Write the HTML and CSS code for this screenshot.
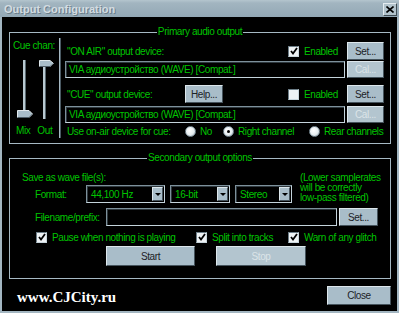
FILE: index.html
```html
<!DOCTYPE html>
<html>
<head>
<meta charset="utf-8">
<link rel="stylesheet" href="styles.css">
</head>
<body>
<div class="window">
  <div class="titlebar">
    <span class="title">Output Configuration</span>
    <span class="xbtn"><svg width="8" height="7" viewBox="0 0 8 7"><path d="M0.5 0.5 L7.5 6.5 M7.5 0.5 L0.5 6.5" stroke="#000" stroke-width="1.6"/></svg></span>
  </div>
  <div class="client">
    <fieldset class="group primary">
      <legend>Primary audio output</legend>
      <div class="primary-inner">
        <div class="cue">
          <div class="cue-label">Cue chan:</div>
          <div class="sliders">
            <div class="slider mix">
              <div class="track"></div>
              <svg class="thumb" width="16" height="8" viewBox="0 0 16 8"><path d="M0.5 0.5 H12 L15.5 4 L12 7.5 H0.5 Z" fill="#a9bdc9" stroke="#e0e8ec" stroke-width="1"/><path d="M0.5 7.5 H12 L15.5 4" fill="none" stroke="#4d5c66"/></svg>
            </div>
            <div class="slider out">
              <div class="track"></div>
              <svg class="thumb" width="15" height="7" viewBox="0 0 15 7"><path d="M0.5 0.5 H11 L14.5 3.5 L11 6.5 H0.5 Z" fill="#a9bdc9" stroke="#e0e8ec" stroke-width="1"/><path d="M0.5 6.5 H11 L14.5 3.5" fill="none" stroke="#4d5c66"/></svg>
            </div>
          </div>
          <div class="slider-labels"><span>Mix</span><span>Out</span></div>
        </div>
        <div class="devices">
          <div class="drow r1">
            <span class="dlabel">"ON AIR" output device:</span>
            <span></span>
            <span></span>
            <label class="check"><span class="cb checked"><svg width="8" height="8" viewBox="0 0 8 8"><path d="M1 4 L3 6.5 L7 1" fill="none" stroke="#000" stroke-width="1.8"/></svg></span>Enabled</label>
            <span class="btn">Set...</span>
          </div>
          <div class="drow r2">
            <span class="field">VIA аудиоустройство (WAVE) [Compat.]</span>
            <span class="btn disabled">Cal...</span>
          </div>
          <div class="drow r3">
            <span class="dlabel">"CUE" output device:</span>
            <span class="btn">Help...</span>
            <span></span>
            <label class="check"><span class="cb"></span>Enabled</label>
            <span class="btn">Set...</span>
          </div>
          <div class="drow r4">
            <span class="field">VIA аудиоустройство (WAVE) [Compat.]</span>
            <span class="btn disabled">Cal...</span>
          </div>
          <div class="radios">
            <span class="rlabel">Use on-air device for cue:</span>
            <span class="ritem no"><span class="radio"></span>No</span>
            <span class="ritem right"><span class="radio on"></span>Right channel</span>
            <span class="ritem rear"><span class="radio"></span>Rear channels</span>
          </div>
        </div>
      </div>
    </fieldset>

    <fieldset class="group secondary">
      <legend>Secondary output options</legend>
      <div class="sec-top">
        <div class="sec-left">
          <div class="save-label">Save as wave file(s):</div>
          <div class="format-row">
            <span class="flabel">Format:</span>
            <span class="combo c1"><span class="ctext">44,100 Hz</span><span class="arrow"><i></i></span></span>
            <span class="combo c2"><span class="ctext">16-bit</span><span class="arrow"><i></i></span></span>
            <span class="combo c3"><span class="ctext">Stereo</span><span class="arrow"><i></i></span></span>
          </div>
        </div>
        <div class="note">(Lower samplerates<br>will be correctly<br>low-pass filtered)</div>
      </div>
      <div class="file-row">
        <span class="flabel2">Filename/prefix:</span>
        <span class="field ffield"></span>
        <span class="btn fset">Set...</span>
      </div>
      <div class="checks-row">
        <label class="check pause"><span class="cb checked"><svg width="8" height="8" viewBox="0 0 8 8"><path d="M1 4 L3 6.5 L7 1" fill="none" stroke="#000" stroke-width="1.8"/></svg></span>Pause when nothing is playing</label>
        <label class="check split"><span class="cb checked"><svg width="8" height="8" viewBox="0 0 8 8"><path d="M1 4 L3 6.5 L7 1" fill="none" stroke="#000" stroke-width="1.8"/></svg></span>Split into tracks</label>
        <label class="check warn"><span class="cb checked"><svg width="8" height="8" viewBox="0 0 8 8"><path d="M1 4 L3 6.5 L7 1" fill="none" stroke="#000" stroke-width="1.8"/></svg></span>Warn of any glitch</label>
      </div>
      <div class="btn-row">
        <span class="btn start">Start</span>
        <span class="btn stop disabled">Stop</span>
      </div>
    </fieldset>

    <div class="bottom">
      <span class="watermark">www.CJCity.ru</span>
      <span class="btn close">Close</span>
    </div>
  </div>
</div>
</body>
</html>
```
FILE: styles.css
```css
* { box-sizing: border-box; }
html, body { margin: 0; padding: 0; background: #000; }
body {
  font-family: "Liberation Sans", Arial, sans-serif;
  font-size: 10px;
  letter-spacing: -0.4px;
  color: #00c400;
}
.window {
  width: 399px;
  height: 313px;
  display: flex;
  flex-direction: column;
  background: #000;
}
.titlebar {
  height: 17px;
  flex: none;
  display: flex;
  align-items: center;
  justify-content: space-between;
  padding: 0 2px 0 4px;
  background: linear-gradient(#b4c5ce 0, #a2b5c0 3px, #93a8b5 100%);
}
.title {
  font-weight: bold;
  font-size: 11px;
  letter-spacing: 0;
  color: #d3dce1;
  text-shadow: 1px 1px 0 #6b7e8a;
  padding-top: 1px;
}
.xbtn {
  width: 14px;
  height: 13px;
  display: flex;
  align-items: center;
  justify-content: center;
  background: #b2c3cc;
  border: 1px solid;
  border-color: #e4ecf0 #3f4c54 #3f4c54 #e4ecf0;
  margin-top: 1px;
}
.client {
  flex: 1;
  border: 2px solid #a3b6c1;
  border-top: 0;
  display: flex;
  flex-direction: column;
}
.group {
  margin: 0 0 0 7px;
  width: 382px;
  padding: 0;
  border: 1px solid #a6b9c4;
  min-width: 0;
}
.group legend {
  margin: 0 auto;
  padding: 0 1px;
  line-height: 12px;
  height: 12px;
  color: #00c400;
}
.primary { margin-top: 9px; height: 118px; }
.primary-inner { display: flex; }
.cue {
  width: 50px;
  height: 100px;
  border-right: 1px solid #a6b9c4;
  box-shadow: 1px 0 0 #4a5963;
  padding-left: 3px;
}
.cue-label { margin-top: 2px; line-height: 12px; white-space: nowrap; }
.sliders { display: flex; margin-top: 8px; height: 60px; padding-left: 4px; gap: 6px; }
.slider { position: relative; height: 60px; }
.slider.mix { width: 16px; }
.slider.out { width: 15px; }
.track {
  width: 3px;
  background: #b9c9d1;
  border-right: 1px solid #58676f;
}
.mix .track { margin-left: 6px; height: 55px; }
.out .track { margin-left: 4px; margin-top: 2px; height: 57px; }
.thumb { position: absolute; left: 0; display: block; }
.mix .thumb { top: 50px; }
.out .thumb { top: 0; }
.slider-labels { display: flex; gap: 7px; margin-top: 5px; margin-left: 3px; line-height: 12px; }

.devices { margin-left: 5px; width: 319px; padding-top: 4px; }
.drow {
  display: grid;
  grid-template-columns: 120px 38px 65px 59px 37px;
  align-items: center;
}
.r1, .r3 { height: 18px; }
.r2, .r4 { height: 17px; grid-template-columns: 282px 37px; }
.r2 { margin-top: 1px; }
.r3 { margin-top: 7px; }
.r4 { margin-top: 3px; }
.dlabel { padding-left: 2px; white-space: nowrap; }
.r3 .btn { height: 18px; }
.r1 .btn { height: 18px; }
.field {
  height: 17px;
  margin-right: 2px;
  background: #000;
  border: 1px solid;
  border-color: #7d909b #c4d3db #c4d3db #7d909b;
  box-shadow: inset 1px 1px 0 #2e383e;
  padding-left: 3px;
  line-height: 15px;
  white-space: nowrap;
  overflow: hidden;
}
.btn {
  display: flex;
  align-items: center;
  justify-content: center;
  background: #a9bdc9;
  border: 1px solid;
  border-color: #dde7ec #45535c #45535c #dde7ec;
  color: #1b2226;
  height: 17px;
}
.btn.disabled { background: #b3c5cf; color: #dbe4e8; }
.check { display: flex; align-items: center; gap: 5px; white-space: nowrap; }
.cb {
  width: 11px;
  height: 11px;
  flex: none;
  background: #eef2f4;
  border: 1px solid;
  border-color: #6d7e88 #c9d6dc #c9d6dc #6d7e88;
  display: flex;
  align-items: center;
  justify-content: center;
}
.radios { display: flex; align-items: center; margin-top: 2px; height: 12px; }
.rlabel { width: 120px; padding-left: 2px; white-space: nowrap; }
.ritem { display: flex; align-items: center; gap: 4px; white-space: nowrap; }
.ritem.no { width: 38px; }
.ritem.right { width: 86px; }
.radio {
  width: 11px;
  height: 11px;
  border-radius: 50%;
  background: radial-gradient(circle at 40% 40%, #ffffff 0, #e6edf0 55%, #9fb0ba 100%);
  border: 1px solid #7b8c96;
  display: flex;
  align-items: center;
  justify-content: center;
  flex: none;
}
.radio.on::after {
  content: "";
  width: 3px;
  height: 3px;
  border-radius: 50%;
  background: #000;
}

.secondary { margin-top: 8px; height: 127px; }
.sec-top { display: flex; }
.sec-left { width: 290px; }
.save-label { margin-top: 8px; padding-left: 12px; line-height: 12px; }
.format-row { display: flex; align-items: center; padding-left: 25px; height: 18px; margin-top: 1px; }
.flabel { width: 51px; }
.combo {
  height: 18px;
  display: flex;
  align-items: center;
  justify-content: space-between;
  background: #000;
  border: 1px solid;
  border-color: #7d909b #c4d3db #c4d3db #7d909b;
  box-shadow: inset 1px 1px 0 #2e383e;
  padding: 1px 1px 1px 4px;
  margin-right: 5px;
}
.c1 { width: 79px; }
.c2 { width: 60px; }
.c3 { width: 57px; }
.arrow {
  width: 11px;
  height: 14px;
  background: #a9bdc9;
  border: 1px solid;
  border-color: #dde7ec #45535c #45535c #dde7ec;
  display: flex;
  align-items: center;
  justify-content: center;
}
.arrow i {
  width: 0;
  height: 0;
  border-left: 3px solid transparent;
  border-right: 3px solid transparent;
  border-top: 3px solid #000;
}
.note { margin-top: 9px; line-height: 10px; white-space: nowrap; }
.file-row { display: flex; align-items: center; margin-top: 5px; padding-left: 25px; height: 18px; }
.flabel2 { width: 71px; }
.ffield { width: 231px; height: 18px; }
.fset { width: 39px; height: 18px; }
.checks-row { display: flex; align-items: center; margin-top: 5px; padding-left: 26px; height: 12px; }
.check.pause { width: 160px; }
.check.split { width: 92px; }
.btn-row { display: flex; margin-top: 3px; padding-left: 96px; gap: 21px; }
.btn.start { width: 89px; height: 20px; }
.btn.stop { width: 90px; height: 20px; }

.bottom { display: flex; justify-content: space-between; align-items: flex-start; padding: 7px 6px 0 15px; }
.watermark {
  font-family: "Liberation Serif", "Times New Roman", serif;
  font-weight: bold;
  font-size: 15px;
  letter-spacing: 0;
  color: #ffffff;
  margin-top: 3px;
}
.btn.close { width: 64px; height: 19px; }
```
